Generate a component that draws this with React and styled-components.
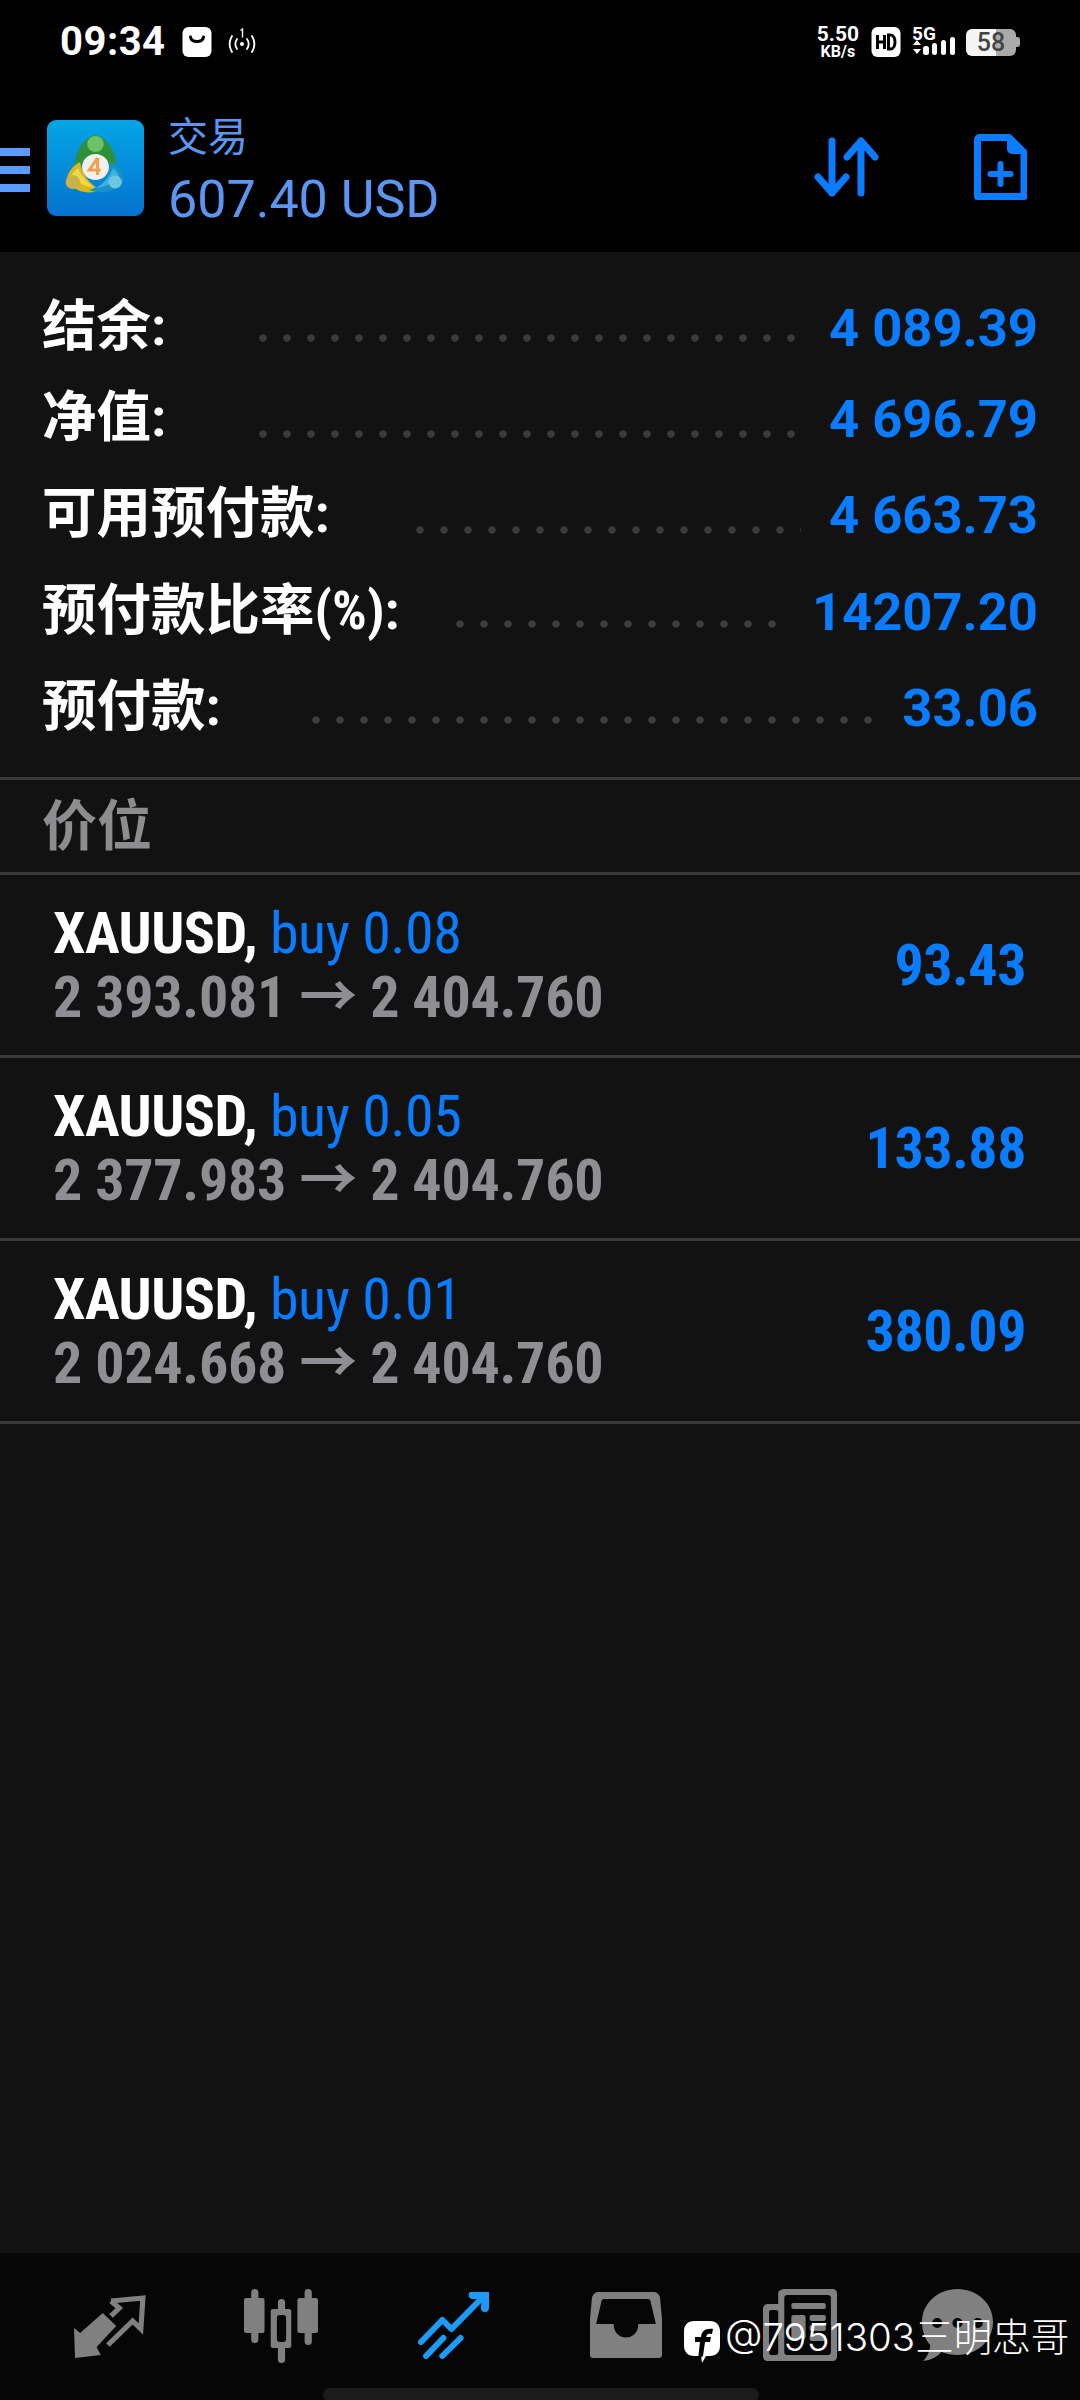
import styled, { createGlobalStyle } from "styled-components";

const GlobalStyle = createGlobalStyle`
    html, body {
        margin: 0;
        padding: 0;
        background: #000;
    }
`;

const CJK = `"Roboto", "Noto Sans CJK SC", sans-serif`;

const Page = styled.div`
    width: 1080px;
    height: 2400px;
    display: flex;
    flex-direction: column;
    position: relative;
    overflow: hidden;
    background: #121212;
    font-family: ${CJK};
`;

const StatusBar = styled.div`
    height: 84px;
    background: #000;
    padding: 24px 64px 0 60px;
    box-sizing: border-box;
    display: flex;
    align-items: flex-start;
    justify-content: space-between;
    color: #fff;
`;

const StatusGroup = styled.div`
    display: flex;
    align-items: center;
    height: 36px;
`;

const Time = styled.span`
    font-size: 40px;
    font-weight: 700;
    line-height: 36px;
    margin-right: 16px;
    letter-spacing: 0.5px;
`;

const Speed = styled.div`
    display: flex;
    flex-direction: column;
    align-items: center;
    font-size: 21px;
    font-weight: 700;
    line-height: 19px;
    margin-right: 12px;
    & > small {
        font-size: 16px;
        line-height: 15px;
    }
`;

const SignalWrap = styled.div`
    position: relative;
    margin-right: 10px;
    height: 32px;
`;

const FiveG = styled.span`
    position: absolute;
    left: 0;
    top: -2px;
    font-size: 19px;
    line-height: 20px;
    font-weight: 700;
    color: #fff;
`;

const Battery = styled.div`
    width: 50px;
    height: 27px;
    border-radius: 6px;
    background: linear-gradient(90deg, #f4f4f4 0 60%, #aaa 60%);
    color: #444;
    font-size: 25px;
    font-weight: 500;
    text-align: center;
    line-height: 27px;
    position: relative;
    &::after {
        content: "";
        position: absolute;
        right: -4px;
        top: 8px;
        width: 4px;
        height: 10px;
        border-radius: 0 3px 3px 0;
        background: #aaa;
    }
`;

const Header = styled.header`
    height: 168px;
    background: #000;
    display: flex;
    align-items: flex-start;
    padding-top: 36px;
    box-sizing: border-box;
`;

const Burger = styled.div`
    width: 30px;
    margin-top: 28px;
    height: 44px;
    background: repeating-linear-gradient(180deg, #5a9bff 0 8px, transparent 8px 18px);
`;

const LogoBox = styled.div`
    margin-left: 17px;
    width: 97px;
    height: 96px;
`;

const Titles = styled.div`
    margin-left: 24px;
    flex: 1;
    color: #5b97f2;
`;

const Title = styled.div`
    font-size: 40px;
    line-height: 44px;
    margin-top: -4px;
`;

const Amount = styled.div`
    font-size: 52px;
    line-height: 60px;
    margin-top: 10px;
`;

const Actions = styled.div`
    display: flex;
    align-items: center;
    margin: 14px 53px 0 0;
    gap: 94px;
`;

const Main = styled.main`
    flex: 1;
    background: #121212;
`;

const Summary = styled.section`
    padding: 26px 42px 0 42px;
    height: 525px;
    box-sizing: border-box;
`;

const SummaryRow = styled.div`
    height: ${(p) => p.$h}px;
    display: flex;
    align-items: center;
`;

const Label = styled.span`
    font-size: 54.5px;
    font-weight: 700;
    font-stretch: 75%;
    color: #fff;
    white-space: nowrap;
    position: relative;
    top: -2px;
`;

const Leader = styled.span`
    flex: 1;
    height: 8px;
    margin: ${(p) => p.$drop}px 28px 0 ${(p) => p.$left}px;
    background-image: radial-gradient(circle at 4px 4px, #3c3c3c 3.4px, transparent 4px);
    background-size: 24px 8px;
    background-repeat: repeat-x;
`;

const Value = styled.span`
    font-size: 52.5px;
    font-weight: 700;
    color: #0a7cff;
    white-space: nowrap;
    position: relative;
    top: 5px;
`;

const Section = styled.div`
    height: 98px;
    box-sizing: border-box;
    border-top: 3px solid #393939;
    border-bottom: 3px solid #393939;
    padding: 0 0 10px 42px;
    display: flex;
    align-items: center;
    font-size: 55px;
    font-weight: 700;
    color: #8d8d90;
`;

const Position = styled.div`
    height: 183px;
    box-sizing: border-box;
    border-bottom: 3px solid #393939;
    padding: 0 54px 0 53px;
    display: flex;
    align-items: center;
    justify-content: space-between;
`;

const Condensed = styled.div`
    font-size: 58px;
    line-height: 64px;
    font-weight: 700;
    font-stretch: 75%;
    letter-spacing: -0.5px;
    white-space: nowrap;
    color: ${(p) => p.$color || "#fff"};
`;

const Blue = styled.span`
    font-weight: 400;
    color: #0a7cff;
`;

const Prices = styled(Condensed)`
    color: #8f8f93;
    letter-spacing: -0.25px;
`;

const BottomNav = styled.nav`
    height: 147px;
    background: #060606;
    display: flex;
    align-items: flex-start;
    padding: 36px 0 0 74px;
    box-sizing: border-box;
`;

const NavItem = styled.div`
    margin-left: ${(p) => p.$gap || 0}px;
    margin-top: ${(p) => p.$top || 0}px;
    display: flex;
`;

const Watermark = styled.div`
    position: absolute;
    left: 684px;
    top: 2320px;
    display: flex;
    align-items: flex-start;
    gap: 5px;
    font-family: "Inter", "Noto Sans CJK SC", sans-serif;
    font-size: 38.5px;
    line-height: 34px;
    font-weight: 300;
    color: #fff;
`;

const HomeBar = styled.div`
    position: absolute;
    left: 323px;
    top: 2388px;
    width: 436px;
    height: 14px;
    border-radius: 8px;
    background: #1b1b1b;
`;

const summary = [
    { label: "结余:", value: "4 089.39", h: 90, left: 93, drop: 30 },
    { label: "净值:", value: "4 696.79", h: 92, left: 93, drop: 40 },
    { label: "可用预付款:", value: "4 663.73", h: 100, left: 87, drop: 40 },
    { label: "预付款比率(%):", value: "14207.20", h: 94, left: 57, drop: 34 },
    { label: "预付款:", value: "33.06", h: 98, left: 92, drop: 34 },
];

const positions = [
    { lot: "0.08", open: "2 393.081", profit: "93.43" },
    { lot: "0.05", open: "2 377.983", profit: "133.88" },
    { lot: "0.01", open: "2 024.668", profit: "380.09" },
];

const MtLogo = () => (
    <svg width="97" height="96" viewBox="0 0 94 96" preserveAspectRatio="none">
        <defs>
            <linearGradient id="bg" x1="0" y1="0" x2="0" y2="1">
                <stop offset="0" stopColor="#05a6e6" />
                <stop offset="1" stopColor="#0472cf" />
            </linearGradient>
        </defs>
        <rect width="94" height="96" rx="9" fill="url(#bg)" />
        <path d="M27 46c0-15 9-29 20-31 11 2 20 16 20 31-6-5-34-5-40 0z" fill="#2f8f3a" />
        <circle cx="47" cy="24" r="8" fill="#6cc266" />
        <path d="M32 42c-8 4-13 12-13 20 9 10 22 13 33 8-10-5-18-15-20-28z" fill="#d8b81c" />
        <path d="M30 48c-3 3-6 6-7 9 8 6 16 10 23 11-7-6-13-12-16-20z" fill="#efd84a" />
        <circle cx="25" cy="62" r="7" fill="#c9b24a" />
        <path d="M62 42c8 4 13 12 12 20-9 10-22 13-33 8 12-3 20-15 21-28z" fill="#1a8fc8" />
        <path d="M64 48c3 3 5 6 6 9-8 7-14 10-22 11 8-5 13-12 16-20z" fill="#3cb4e2" />
        <circle cx="66" cy="62" r="6.500" fill="#6cc6e4" />
        <circle cx="47" cy="47" r="13" fill="#f2f0ea" />
        <path d="M49 38l-8 12h11M49 38v17" fill="none" stroke="#f0a050" strokeWidth="3" />
    </svg>
);

const SortIcon = () => (
    <svg width="66" height="60" viewBox="0 0 66 60" fill="none" stroke="#0a7cff" strokeWidth="7" strokeLinecap="round" strokeLinejoin="round">
        <path d="M18 4v52M4 40l14 16 14-16" />
        <path d="M47 56V4M33 20L47 4l14 16" />
    </svg>
);

const NewDocIcon = () => (
    <svg width="53" height="66" viewBox="0 0 53 66" fill="none">
        <path d="M5 3.500h30l15 15V62.500H3.500V5z" stroke="#0a7cff" strokeWidth="7" strokeLinejoin="round" />
        <path d="M33 3l17 17H38a5 5 0 0 1-5-5z" fill="#0a7cff" />
        <path d="M26.500 30v20M16.500 40h20" stroke="#0a7cff" strokeWidth="6" strokeLinecap="round" />
    </svg>
);

const BagIcon = () => (
    <svg width="30" height="30" viewBox="0 0 29 30">
        <rect width="29" height="30" rx="6" fill="#fff" />
        <path d="M8 10c1 6 12 6 13 0" fill="none" stroke="#000" strokeWidth="3" strokeLinecap="round" />
    </svg>
);

const HotspotIcon = () => (
    <svg width="30" height="30" viewBox="0 0 30 30" fill="none" stroke="#fff" strokeWidth="1.800" strokeLinecap="round" style={{ marginLeft: 15 }}>
        <path d="M5 9c-3 5-3 11 0 16M10 12c-2 3-2 7 0 10M20 12c2 3 2 7 0 10M25 9c3 5 3 11 0 16" />
        <circle cx="15" cy="17" r="2" fill="#fff" stroke="none" />
        <path d="M14 3l1.500-1v8" strokeWidth="1.400" />
    </svg>
);

const HdIcon = () => (
    <svg width="30" height="30" viewBox="0 0 29 30" style={{ marginRight: 11 }}>
        <rect width="29" height="30" rx="6" fill="#fff" />
        <path d="M6 8v14M13 8v14M6 15h7M17 8v14h2c6 0 6-14 0-14z" fill="none" stroke="#000" strokeWidth="3" />
    </svg>
);

const SignalIcon = () => (
    <svg width="44" height="32" viewBox="0 0 44 32">
        <path d="M1 19l4-5 4 5zM1 23l4 5 4-5z" fill="#fff" />
        <rect x="11" y="20" width="6" height="9" rx="2.500" fill="#fff" />
        <rect x="20" y="17" width="5" height="12" rx="2.500" fill="#fff" />
        <rect x="29" y="14" width="5" height="15" rx="2.500" fill="#fff" />
        <rect x="38" y="11" width="5" height="18" rx="2.500" fill="#fff" />
    </svg>
);

const ExchangeIcon = () => (
    <svg width="72" height="64" viewBox="0 0 70 64" preserveAspectRatio="none">
        <path d="M0 33l6 5L28 18l13 13-19 21 4 8-25 3z" fill="#808080" />
        <path d="M36 6L67 3l-2 31-8-8-24 24M36 6l8 7-8 8" fill="none" stroke="#808080" strokeWidth="5" />
    </svg>
);

const CandlesIcon = () => (
    <svg width="75" height="74" viewBox="0 0 73 74" fill="#808080" preserveAspectRatio="none">
        <rect x="7" y="0" width="7" height="54" rx="3.500" />
        <rect x="0" y="9" width="20" height="35" rx="2" />
        <rect x="33" y="10" width="7" height="64" rx="3.500" />
        <rect x="26" y="20" width="20" height="39" rx="2" />
        <rect x="59" y="0" width="7" height="56" rx="3.500" />
        <rect x="52" y="9" width="20" height="35" rx="2" />
        <rect x="32" y="26" width="9" height="27" rx="3" fill="#060606" />
    </svg>
);

const TrendIcon = () => (
    <svg width="71" height="68" viewBox="0 0 70 68" fill="none" stroke="#1c9bf8" strokeWidth="6" strokeLinecap="round" strokeLinejoin="round" preserveAspectRatio="none">
        <path d="M3 50l21-22 9 9 30-31" />
        <path d="M54 3h13l-1 13" strokeWidth="8" />
        <path d="M8 64l17-18M24 64l18-18" />
    </svg>
);

const InboxIcon = () => (
    <svg width="72" height="66" viewBox="0 0 70 66" preserveAspectRatio="none">
        <path d="M8 0h54c3 0 5 2 6 5l2 22v36c0 2-1 3-3 3H3c-2 0-3-1-3-3V27L2 5c1-3 3-5 6-5z" fill="#808080" />
        <path d="M14 7h42c2 0 3 1 3 3l5 22H47c0 18-24 18-24 0H6l5-22c0-2 1-3 3-3z" fill="#060606" />
    </svg>
);

const NewsIcon = () => (
    <svg width="74" height="72" viewBox="0 0 73 72" preserveAspectRatio="none">
        <path d="M22 0h47c2 0 4 2 4 4v64c0 2-2 4-4 4H5c-3 0-5-2-5-5V20c0-3 2-5 5-5h10V4c0-2 3-4 7-4z" fill="#808080" />
        <rect x="6" y="21" width="9" height="45" rx="2" fill="#060606" />
        <rect x="21" y="6" width="46" height="60" rx="3" fill="#060606" />
        <rect x="28" y="14" width="34" height="6" rx="2" fill="#808080" />
        <rect x="28" y="26" width="14" height="24" rx="2" fill="#808080" />
        <rect x="46" y="26" width="16" height="6" rx="2" fill="#808080" />
        <rect x="46" y="36" width="16" height="6" rx="2" fill="#808080" />
        <rect x="46" y="46" width="16" height="6" rx="2" fill="#808080" />
    </svg>
);

const ChatIcon = () => (
    <svg width="71" height="72" viewBox="0 0 70 72" preserveAspectRatio="none">
        <path d="M35 0c19 0 35 14 35 33S54 66 35 66c-6 0-11-1-16-3-4 5-10 8-18 9 4-4 7-10 7-16C3 50 0 42 0 33 0 14 16 0 35 0z" fill="#808080" />
        <circle cx="15" cy="34" r="5" fill="#060606" />
        <circle cx="35" cy="34" r="5" fill="#060606" />
        <circle cx="55" cy="34" r="5" fill="#060606" />
    </svg>
);

const FbBubble = () => (
    <svg width="36" height="44" viewBox="0 0 36 44">
        <path d="M10 1h16c6 0 10 4 10 10v15c0 6-4 10-10 10h-4l-4 7-1-7h-7C4 36 0 32 0 26V11C0 5 4 1 10 1z" fill="#fff" />
        <path d="M14 40l2-18h-5v-5h6c1-6 4-9 12-8l-1 5c-4-1-5 0-6 3h5l-1 5h-5l-2 14z" fill="#000" />
    </svg>
);

const App = () => {
    return (
        <>
            <GlobalStyle />
            <Page>
                <StatusBar>
                    <StatusGroup>
                        <Time>09:34</Time>
                        <BagIcon />
                        <HotspotIcon />
                    </StatusGroup>
                    <StatusGroup>
                        <Speed>5.50<small>KB/s</small></Speed>
                        <HdIcon />
                        <SignalWrap>
                            <FiveG>5G</FiveG>
                            <SignalIcon />
                        </SignalWrap>
                        <Battery>58</Battery>
                    </StatusGroup>
                </StatusBar>

                <Header>
                    <Burger />
                    <LogoBox><MtLogo /></LogoBox>
                    <Titles>
                        <Title>交易</Title>
                        <Amount>607.40 USD</Amount>
                    </Titles>
                    <Actions>
                        <SortIcon />
                        <NewDocIcon />
                    </Actions>
                </Header>

                <Main>
                    <Summary>
                        {summary.map((row) => (
                            <SummaryRow key={row.label} $h={row.h}>
                                <Label>{row.label}</Label>
                                <Leader $left={row.left} $drop={row.drop} />
                                <Value>{row.value}</Value>
                            </SummaryRow>
                        ))}
                    </Summary>

                    <Section>价位</Section>

                    {positions.map((pos) => (
                        <Position key={pos.lot}>
                            <div>
                                <Condensed>XAUUSD, <Blue>buy {pos.lot}</Blue></Condensed>
                                <Prices>{pos.open} → 2 404.760</Prices>
                            </div>
                            <Condensed $color="#0a7cff">{pos.profit}</Condensed>
                        </Position>
                    ))}
                </Main>

                <BottomNav>
                    <NavItem $top={6}><ExchangeIcon /></NavItem>
                    <NavItem $gap={98}><CandlesIcon /></NavItem>
                    <NavItem $gap={99} $top={3}><TrendIcon /></NavItem>
                    <NavItem $gap={101} $top={3}><InboxIcon /></NavItem>
                    <NavItem $gap={101}><NewsIcon /></NavItem>
                    <NavItem $gap={85}><ChatIcon /></NavItem>
                </BottomNav>

                <Watermark>
                    <FbBubble />
                    @7951303三明忠哥
                </Watermark>
                <HomeBar />
            </Page>
        </>
    );
};

export default App;
